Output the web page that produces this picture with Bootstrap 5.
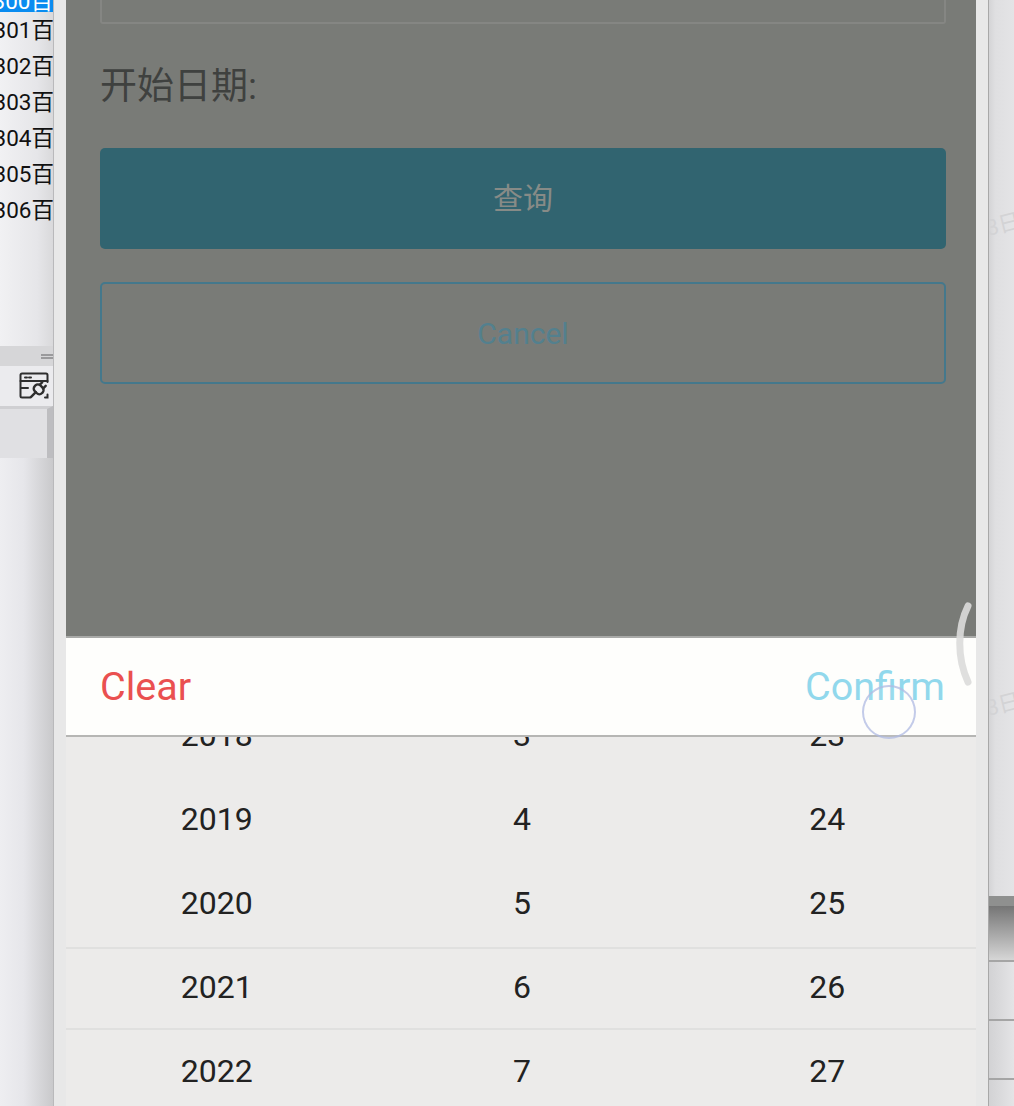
<!DOCTYPE html>
<html lang="zh">
<head>
<meta charset="utf-8">
<title>日期选择</title>
<link href="https://cdn.jsdelivr.net/npm/bootstrap@5.3.0/dist/css/bootstrap.min.css" rel="stylesheet">
<style>
html,body{height:1106px;overflow:hidden;margin:0;background:#e6e6e8}
body{font-family:Roboto,"Noto Sans CJK SC",sans-serif}
.stage{height:1106px;position:relative}
.left-pane{width:54px;flex:none;background:linear-gradient(90deg,#eeeef1 0,#e6e6ea 45%,#c9c9cb 100%);border-right:1px solid #b9b9bb}
.file-list{height:352px;background:linear-gradient(90deg,#f1f1f3 0,#e6e6e9 70%,#d9d9db 100%);margin-top:-6px}
.file-row{height:36px;line-height:36px;font-size:22.500px;color:#111;white-space:nowrap;justify-content:flex-end;margin-right:-1px}
.file-row.picked{height:18px;line-height:14px;background:#0a8cf0;color:#fff;margin-right:0}
.grip-bar{height:20px;background:#d6d6d8}
.grip-mark{width:12px;height:5px;border-top:2px solid #9a9a9c;border-bottom:2px solid #9a9a9c}
.tool-row{height:40px;background:#ebebee}
.tab-strip{height:52px;background:#e0e0e3;border-top:3px solid #cfcfd2;border-right:6px solid #bdbdc0}
.phone-edge{width:935px;flex:none;background:#e8e8e8;padding:0 12px;border-right:1px solid #a8a8a8}
.phone-screen{height:1106px;background:#ecebea}
.dim-layer{height:638px;background:#797b77;padding:0 30px 0 34px;border-bottom:2px solid #a9aaa8}
.ghost-input{height:25px;margin-top:-1px;border:2px solid #858683;border-top:0;border-radius:0 0 3px 3px}
.date-label{margin:41px 0 39px;font-size:37px;line-height:44px;color:#3f413f}
.action-solid,.action-ghost{display:flex;align-items:center;justify-content:center;height:101px;border-radius:5px;font-size:30px}
.action-solid{background:#316470;color:#878b87;margin-bottom:33px}
.action-ghost{background:transparent;border:2px solid #44788c;color:#53808e;height:102px}
.sheet-bar{height:99px;background:#fefefc;border-bottom:2px solid #b6b6b4;padding:0 31px 0 34px;font-size:39.500px}
.sheet-clear{color:#ea5050}
.sheet-ok{color:#91d8ec}
.wheel{height:369px;overflow:hidden;position:relative;background:#ecebea}
.wheel-rows{margin-top:-44px;margin-right:-4px}
.wheel-row{height:84px;display:grid;grid-template-columns:repeat(3,1fr);align-items:center;text-align:center;font-size:32px;color:#222;margin-left:-2px}
.wheel-band{position:absolute;left:0;right:0;top:210px;height:83px;border-top:2px solid #e0e0df;border-bottom:2px solid #e0e0df}
.right-pane{flex:1;background:linear-gradient(90deg,#d4d4d6 0,#dfdfe1 25%,#e4e4e6 100%);position:relative;overflow:hidden}
.right-top{height:896px}
.right-dark{height:10px;background:#8f908f}
.right-fade{height:54px;background:linear-gradient(180deg,#757575 0,#d6d6d6 100%)}
.right-line{height:2px;background:#a5a5a5}
.right-cell{height:57px;background:linear-gradient(90deg,#d2d2d4,#e4e4e6)}
.water{position:absolute;left:-3px;font-size:22px;color:#d3d3d5;transform:rotate(-14deg);white-space:nowrap}
.touch-dot{position:absolute;left:862px;top:685px;width:54px;height:54px;border-radius:50%;border:2px solid rgba(175,185,225,.75);background:rgba(255,255,255,.08)}
.edge-arc{position:absolute;left:950px;top:598px}
</style>
</head>
<body>
<div class="stage d-flex">
  <aside class="left-pane overflow-hidden">
    <div class="file-list">
      <div class="file-row picked d-flex">300百</div>
      <div class="file-row d-flex">301百</div>
      <div class="file-row d-flex">302百</div>
      <div class="file-row d-flex">303百</div>
      <div class="file-row d-flex">304百</div>
      <div class="file-row d-flex">305百</div>
      <div class="file-row d-flex">306百</div>
    </div>
    <div class="grip-bar d-flex align-items-center justify-content-end"><div class="grip-mark"></div></div>
    <div class="tool-row d-flex align-items-center justify-content-end pe-1">
      <svg width="30" height="28" viewBox="0 0 30 28" fill="none" stroke="#2e2e2e" stroke-width="2" stroke-linecap="round" aria-hidden="true">
        <path d="M11 25.500H3A1.500 1.500 0 0 1 1.500 24V3A1.500 1.500 0 0 1 3 1.500h24A1.500 1.500 0 0 1 28.500 3v7"/>
        <path d="M1.500 9H28.500M6 5.500h2M10 5.500h2M2 16h7M26 25.500h2.500v-3"/>
        <g transform="translate(20 17) rotate(45)" stroke-width="2.400">
          <rect x="-5" y="-3.500" width="10" height="8" rx="3.500"/>
          <path d="M-2.500 -3.500v-3.500M2.500 -3.500v-3.500M0 4.500v7"/>
        </g>
      </svg>
    </div>
    <div class="tab-strip"></div>
  </aside>
  <main class="phone-edge">
    <div class="phone-screen d-flex flex-column">
      <section class="dim-layer">
        <div class="ghost-input"></div>
        <div class="date-label">开始日期:</div>
        <div class="action-solid">查询</div>
        <div class="action-ghost">Cancel</div>
      </section>
      <div class="sheet-bar d-flex align-items-center justify-content-between">
        <span class="sheet-clear">Clear</span>
        <span class="sheet-ok">Confirm</span>
      </div>
      <div class="wheel">
        <div class="wheel-rows">
          <div class="wheel-row"><span>2018</span><span>3</span><span>23</span></div>
          <div class="wheel-row"><span>2019</span><span>4</span><span>24</span></div>
          <div class="wheel-row"><span>2020</span><span>5</span><span>25</span></div>
          <div class="wheel-row"><span>2021</span><span>6</span><span>26</span></div>
          <div class="wheel-row"><span>2022</span><span>7</span><span>27</span></div>
        </div>
        <div class="wheel-band"></div>
      </div>
    </div>
  </main>
  <aside class="right-pane">
    <div class="right-top"></div>
    <div class="right-dark"></div>
    <div class="right-fade"></div>
    <div class="right-line"></div>
    <div class="right-cell"></div>
    <div class="right-line"></div>
    <div class="right-cell"></div>
    <div class="right-line"></div>
    <div class="right-cell"></div>
    <div class="water" style="top:208px">3日</div>
    <div class="water" style="top:688px">3日</div>
  </aside>
  <div class="touch-dot"></div>
  <svg class="edge-arc" width="26" height="92" viewBox="0 0 26 92" fill="none" aria-hidden="true"><path d="M18 8C7 30 7 60 18 84" stroke="#dcdcda" stroke-width="7" stroke-linecap="round" opacity=".9"/></svg>
</div>
</body>
</html>
